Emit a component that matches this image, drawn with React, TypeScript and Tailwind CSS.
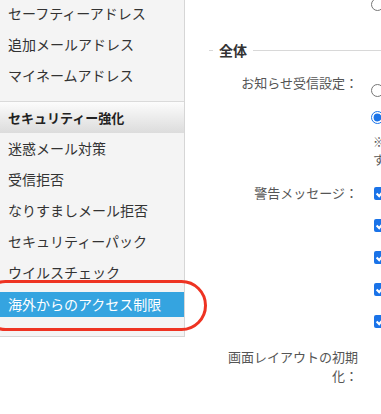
const addressMenu = ["セーフティーアドレス", "追加メールアドレス", "マイネームアドレス"]
const securityMenu = ["迷惑メール対策", "受信拒否", "なりすましメール拒否", "セキュリティーパック", "ウイルスチェック"]

function MenuItem({ label }: { label: string }) {
	return <div className="h-[31px] flex items-center pl-2 text-[14px] text-[#333] whitespace-nowrap">{label}</div>
}

export default function App() {
	return (
		<div className="relative w-[381px] h-[414px] overflow-hidden bg-white font-['Noto_Sans_CJK_JP',sans-serif] flex items-start">
			{/* Sidebar */}
			<aside className="w-[185px] shrink-0 -mt-[2px] bg-[#f4f4f4] border-r border-b border-[#d6d6d6] pb-[19px]">
				<div className="pb-[10px]">
					{addressMenu.map((m) => (
						<MenuItem key={m} label={m} />
					))}
				</div>
				<div className="h-[32px] border-t border-[#dadada] bg-gradient-to-b from-[#fcfcfc] to-[#dcdcdc] flex items-center pl-2 text-[13px] font-bold text-[#222]">
					セキュリティー強化
				</div>
				{securityMenu.map((m) => (
					<MenuItem key={m} label={m} />
				))}
				<div className="pt-[4px]">
					<div className="h-[25px] bg-[#35a4e0] flex items-center pl-2 text-[14px] text-white whitespace-nowrap">
						海外からのアクセス制限
					</div>
				</div>
			</aside>

			{/* Main settings */}
			<main className="flex-1 min-w-0 text-[#555]">
				<div className="pl-[186px] -mt-[2px] h-[13px]">
					<input type="radio" name="prev" className="block w-[13px] h-[13px]" />
				</div>

				{/* Fieldset legend */}
				<div className="mt-[29px] h-[20px] pl-[24px] flex items-center">
					<div className="w-[4px] h-px bg-[#d8d8d8]" />
					<span className="px-[6px] text-[14px] font-bold text-[#333]">全体</span>
					<div className="flex-1 h-px bg-[#d8d8d8]" />
				</div>

				{/* お知らせ受信設定 */}
				<div className="mt-[13px] flex pl-[43px]">
					<div className="w-[130px] shrink-0 text-right text-[13px] leading-[20px]">お知らせ受信設定：</div>
					<div className="ml-[13px] pt-[4px] whitespace-nowrap">
						<div className="h-[27px] flex items-center">
							<input type="radio" name="notice" className="w-[13px] h-[13px]" />
						</div>
						<div className="h-[27px] flex items-center">
							<input type="radio" name="notice" defaultChecked className="w-[13px] h-[13px] accent-[#1a73e8]" />
						</div>
						<div className="mt-[2px] ml-[2px] text-[12px] leading-[18px] text-[#555]">
							※重要なお知らせは設定に関わらず配信されま
							<br />
							す。
						</div>
					</div>
				</div>

				{/* 警告メッセージ */}
				<div className="mt-[8px] flex pl-[43px]">
					<div className="w-[130px] shrink-0 text-right text-[13px] leading-[32px]">警告メッセージ：</div>
					<div className="ml-[16px]">
						{[0, 1, 2, 3, 4].map((i) => (
							<div key={i} className="h-[32px] flex items-center">
								<input type="checkbox" defaultChecked className="w-[13px] h-[13px] accent-[#1a73e8]" />
							</div>
						))}
					</div>
				</div>

				{/* 画面レイアウトの初期化 */}
				<div className="mt-[10px] flex pl-[43px]">
					<div className="w-[130px] shrink-0 text-right text-[13px] leading-[19px]">画面レイアウトの初期化：</div>
				</div>
			</main>

			{/* Red highlight ring */}
			<div className="absolute left-[-20px] top-[280px] w-[227px] h-[51px] rounded-full border-[3px] border-[#ee3322]" />
		</div>
	)
}
